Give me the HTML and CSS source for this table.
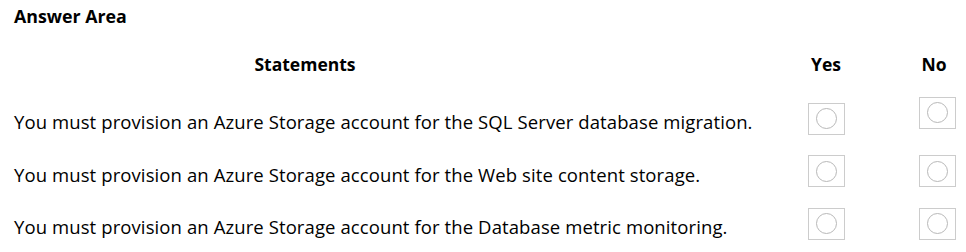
FILE: index.html
```html
<!DOCTYPE html>
<html lang="en">
  <head>
    <meta charset="utf-8" />
    <title>Answer Area</title>
    <link rel="stylesheet" href="styles.css">
  </head>
  <body>
    <div class="area">
      <h2 class="title">Answer Area</h2>
      <div class="grid">
        <div class="head statements">Statements</div>
        <div class="head yes">Yes</div>
        <div class="head no">No</div>

        <div class="stmt">You must provision an Azure Storage account for the SQL Server database migration.</div>
        <div class="cell"><span class="box"><span class="radio"></span></span></div>
        <div class="cell"><span class="box up"><span class="radio"></span></span></div>

        <div class="stmt">You must provision an Azure Storage account for the Web site content storage.</div>
        <div class="cell"><span class="box"><span class="radio"></span></span></div>
        <div class="cell"><span class="box"><span class="radio"></span></span></div>

        <div class="stmt">You must provision an Azure Storage account for the Database metric monitoring.</div>
        <div class="cell"><span class="box"><span class="radio"></span></span></div>
        <div class="cell"><span class="box"><span class="radio"></span></span></div>
      </div>
    </div>
  </body>
</html>
```

FILE: styles.css
```css
html {
  background: #fff;
}
body {
  margin: 0;
  font-family: "Open Sans", sans-serif;
  color: #000;
}

.area {
  padding: 5px 0 0 14px;
}

.title {
  margin: 0;
  font-size: 17.8px;
  font-weight: 700;
  line-height: 22px;
}

.grid {
  display: grid;
  grid-template-columns: 780px 64px 49px 60px;
  grid-template-rows: 44px repeat(3, 52.5px);
  margin-top: 25px;
}

.head {
  font-size: 17.5px;
  font-weight: 700;
  line-height: 24px;
}
.statements {
  width: 582px;
  text-align: center;
}
.yes {
  text-align: center;
}
.no {
  grid-column: 4;
  text-align: center;
  padding-right: 6px;
}

.stmt {
  font-size: 18.5px;
  letter-spacing: 0.1px;
  line-height: 52px;
}

.cell {
  display: flex;
  justify-content: center;
  align-items: center;
}
.cell:nth-child(3n) {
  grid-column: 4;
}

.box {
  width: 37px;
  height: 32px;
  margin-bottom: 7px;
  border: 1px solid #ccc;
  display: flex;
  justify-content: center;
  align-items: center;
  box-sizing: border-box;
}
.box.up {
  margin-bottom: 19px;
}

.radio {
  width: 19px;
  height: 19px;
  border: 1px solid #b8b8b8;
  border-radius: 50%;
}
```
